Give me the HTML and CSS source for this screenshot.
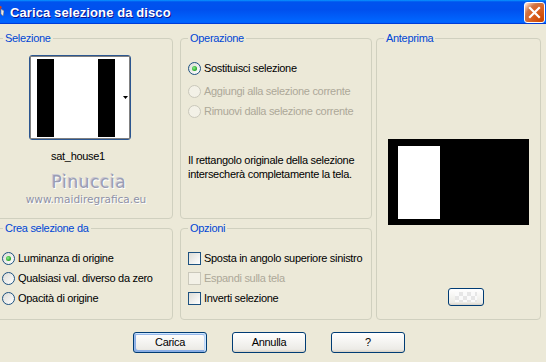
FILE: index.html
```html
<!DOCTYPE html>
<html lang="it">
<head>
    <meta charset="UTF-8">
    <title>Carica selezione da disco</title>
    <link rel="stylesheet" href="styles.css">
</head>
<body>
    <div class="window">
        <!-- barra del titolo -->
        <div class="titlebar">
            <svg class="app-icon" width="16" height="16" viewBox="0 0 16 16">
                <path d="M2 14 L9 4 L12 6 L5 15 Z" fill="#f0c040" stroke="#8a5a10" stroke-width="1"/>
                <path d="M9 4 L11 1 L14 3 L12 6 Z" fill="#d04020"/>
                <path d="M13 5 L16 7 L15 12 L13 10 Z" fill="#e8e8e8" stroke="#808080" stroke-width="0.6"/>
            </svg>
            <span class="title">Carica selezione da disco</span>
            <a href="javascript:;" class="close">
                <svg width="13" height="13" viewBox="0 0 13 13">
                    <path d="M2 2 L11 11 M11 2 L2 11" stroke="#fff" stroke-width="2.2" stroke-linecap="square"/>
                </svg>
            </a>
        </div>

        <div class="content">
            <div class="panels">
                <!-- Selezione -->
                <div class="group group-sel">
                    <span class="group-title">Selezione</span>
                    <div class="thumb">
                        <svg width="100" height="83" viewBox="0 0 100 83">
                            <rect x="0" y="0" width="100" height="83" fill="#fff"/>
                            <rect x="7" y="3" width="17" height="78" fill="#000"/>
                            <rect x="68" y="3" width="17" height="78" fill="#000"/>
                            <rect x="0.5" y="0.5" width="99" height="82" fill="none" stroke="#000" stroke-width="1" stroke-dasharray="1 1"/>
                            <path d="M93 40 L98 40 L95.5 43 Z" fill="#000"/>
                        </svg>
                    </div>
                    <div class="thumb-name">sat_house1</div>
                    <div class="watermark">Pinuccia</div>
                    <div class="watermark-url">www.maidiregrafica.eu</div>
                </div>

                <!-- Operazione -->
                <div class="group group-op">
                    <span class="group-title">Operazione</span>
                    <label class="row first"><input type="radio" name="op" checked> Sostituisci selezione</label>
                    <label class="row disabled"><input type="radio" name="op" disabled> Aggiungi alla selezione corrente</label>
                    <label class="row disabled"><input type="radio" name="op" disabled> Rimuovi dalla selezione corrente</label>
                    <p class="note">Il rettangolo originale della selezione<br>intersecherà completamente la tela.</p>
                </div>

                <!-- Anteprima -->
                <div class="group group-prev">
                    <span class="group-title">Anteprima</span>
                    <div class="preview">
                        <div class="preview-white"></div>
                    </div>
                    <a href="javascript:;" class="btn btn-small"><span class="checker"></span></a>
                </div>

                <!-- Crea selezione da -->
                <div class="group group-crea">
                    <span class="group-title">Crea selezione da</span>
                    <label class="row"><input type="radio" name="src" checked> Luminanza di origine</label>
                    <label class="row"><input type="radio" name="src"> Qualsiasi val. diverso da zero</label>
                    <label class="row"><input type="radio" name="src"> Opacità di origine</label>
                </div>

                <!-- Opzioni -->
                <div class="group group-opt">
                    <span class="group-title">Opzioni</span>
                    <label class="row"><input type="checkbox"> Sposta in angolo superiore sinistro</label>
                    <label class="row disabled"><input type="checkbox" disabled> Espandi sulla tela</label>
                    <label class="row"><input type="checkbox"> Inverti selezione</label>
                </div>
            </div>

            <div class="buttons">
                <a href="javascript:;" class="btn btn-default">Carica</a>
                <a href="javascript:;" class="btn">Annulla</a>
                <a href="javascript:;" class="btn">?</a>
            </div>
        </div>
    </div>
</body>
</html>
```

FILE: styles.css
```css
* {
    margin: 0;
    padding: 0;
    box-sizing: border-box;
}
a {
    text-decoration: none;
    color: #000;
}
body {
    width: 546px;
    height: 362px;
    overflow: hidden;
    background: #ece9d8;
    font-family: "Liberation Sans", Arial, sans-serif;
    font-size: 11px;
    letter-spacing: -0.3px;
    color: #000;
}
.window {
    height: 362px;
}
/* barra del titolo */
.titlebar {
    display: flex;
    align-items: center;
    gap: 6px;
    height: 24px;
    background: linear-gradient(180deg, #0997ff, #0053ee 8%, #0050ee 40%, #0066ff 88%, #0066ff 93%, #005bff 95%, #003dd7 96%, #003dd7);
    overflow: hidden;
}
.app-icon {
    margin-left: -12px;
    flex: none;
}
.title {
    color: #fff;
    font-weight: bold;
    font-size: 13px;
    letter-spacing: 0.1px;
    text-shadow: 1px 1px #0f1089;
}
.close {
    margin-left: auto;
    margin-right: 1px;
    width: 21px;
    height: 21px;
    border: 1px solid #fff;
    border-radius: 3px;
    display: flex;
    align-items: center;
    justify-content: center;
    background: radial-gradient(circle at 90% 90%, #cc4600 0, #dc6527 55%, #cd7546 70%, #ffccb2 90%, #fff 100%);
}
/* contenuto */
.content {
    padding-top: 14px;
}
.panels {
    display: grid;
    grid-template-columns: 181px 192px 165px;
    grid-template-rows: 181px 92px;
    column-gap: 4px;
    row-gap: 9px;
    margin-left: -5px;
}
.group {
    position: relative;
    border: 1px solid #d0d0bf;
    border-radius: 4px;
}
.group-title {
    position: absolute;
    top: -7px;
    left: 7px;
    padding: 0 2px;
    line-height: 13px;
    color: #0046d5;
    background: #ece9d8;
}
.group-sel,
.group-crea {
    margin-right: 3px;
}
.group-prev {
    grid-column: 3;
    grid-row: 1 / span 2;
    display: flex;
    flex-direction: column;
    align-items: center;
}
/* Selezione */
.group-sel {
    padding-top: 16px;
}
.thumb {
    width: 102px;
    height: 85px;
    margin-left: 33px;
    border: 1px solid #2b5690;
    border-radius: 3px;
    background: #fff;
}
.thumb svg {
    display: block;
}
.thumb-name {
    width: 102px;
    margin-left: 31px;
    margin-top: 10px;
    line-height: 13px;
    text-align: center;
}
.watermark {
    margin-top: 9px;
    padding-left: 10px;
    text-align: center;
    font-family: "DejaVu Sans", sans-serif;
    font-size: 17px;
    letter-spacing: 0.6px;
    line-height: 20px;
    color: #9a9db4;
    text-shadow: 1px 1px #fff, -1px -1px #c8c8d4;
}
.watermark-url {
    margin-top: 1px;
    padding-left: 4px;
    text-align: center;
    font-family: "DejaVu Sans", sans-serif;
    font-size: 10.5px;
    letter-spacing: 0;
    line-height: 12px;
    color: #8e91a6;
    text-shadow: 1px 1px #fff;
}
/* righe con radio e checkbox */
.row {
    display: flex;
    align-items: center;
    gap: 3px;
    height: 20px;
    line-height: 13px;
    white-space: nowrap;
}
.row.first {
    margin-bottom: 3px;
}
.row.disabled {
    color: #aca899;
}
input[type="radio"],
input[type="checkbox"] {
    appearance: none;
    flex: none;
    width: 13px;
    height: 13px;
    margin: 0;
    border: 1px solid #1c5180;
    background: linear-gradient(135deg, #dcdcd7, #fff);
}
input[type="radio"] {
    border-radius: 50%;
    display: flex;
    align-items: center;
    justify-content: center;
}
input[type="radio"]:checked::after {
    content: "";
    width: 5px;
    height: 5px;
    border-radius: 50%;
    background: radial-gradient(circle at 40% 40%, #8cf08c, #21a121 70%);
}
input[type="radio"]:disabled,
input[type="checkbox"]:disabled {
    border-color: #cac8bb;
    background: #f3f1e7;
}
.group-op {
    padding: 19px 0 0 7px;
}
.note {
    margin-top: 32px;
    line-height: 14px;
}
.group-crea {
    padding: 19px 0 0 6px;
}
.group-opt {
    padding: 19px 0 0 7px;
}
/* Anteprima */
.preview {
    margin-top: 100px;
    width: 141px;
    height: 86px;
    background: #000;
    padding: 7px 0 0 10px;
}
.preview-white {
    width: 42px;
    height: 73px;
    background: #fff;
}
/* pulsanti */
.btn {
    display: flex;
    align-items: center;
    justify-content: center;
    width: 74px;
    height: 21px;
    border: 1px solid #003c74;
    border-radius: 3px;
    background: linear-gradient(180deg, #fff, #ecebe6 86%, #d6d0c5);
    line-height: 13px;
}
.btn-default {
    box-shadow: inset -1px 1px #cee7ff, inset 1px 2px #98b8ea, inset -2px 2px #bcd4f6, inset 1px -1px #89ade4, inset 2px -2px #89ade4;
}
.btn-small {
    align-self: flex-start;
    margin-left: 71px;
    margin-top: 63px;
    width: 36px;
    height: 18px;
    padding: 3px 6px;
}
.checker {
    display: block;
    width: 100%;
    height: 100%;
    background: repeating-conic-gradient(#e6e6e6 0 25%, #fafafa 0 50%) 0 0 / 8px 8px;
}
.buttons {
    display: flex;
    gap: 25px;
    padding-left: 133px;
    margin-top: 12px;
}
```
